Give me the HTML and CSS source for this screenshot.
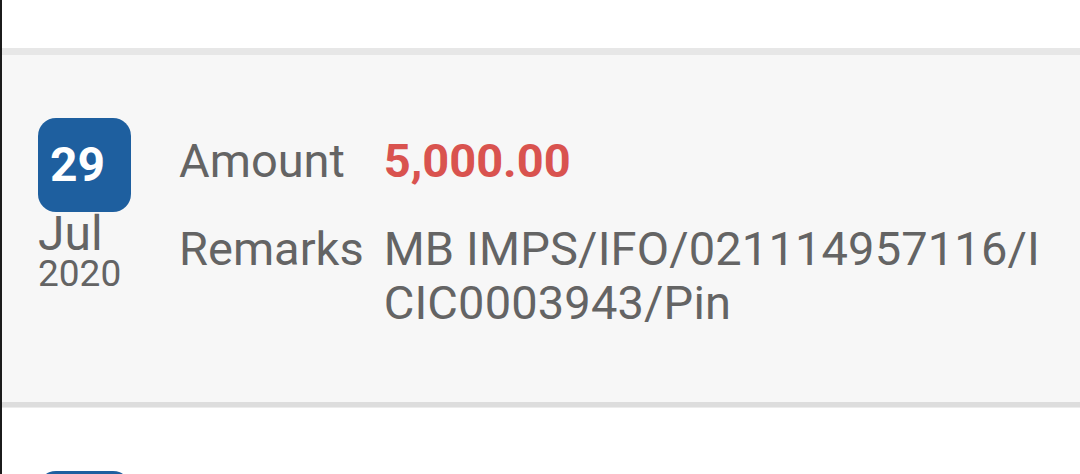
FILE: index.html
```html
<!DOCTYPE html>
<html lang="en">
<head>
<meta charset="utf-8">
<title>Transactions</title>
<link rel="stylesheet" href="styles.css">
</head>
<body>
<div class="screen">
  <div class="list">
    <div class="item item-tail"></div>
    <div class="divider divider-top"></div>
    <div class="item item-active">
      <div class="date">
        <div class="badge">29</div>
        <div class="month">Jul</div>
        <div class="year">2020</div>
      </div>
      <div class="details">
        <div class="label">Amount</div>
        <div class="value amount">5,000.00</div>
        <div class="label">Remarks</div>
        <div class="value remarks">MB IMPS/IFO/021114957116/ICIC0003943/Pin</div>
      </div>
    </div>
    <div class="divider divider-bottom"></div>
    <div class="item">
      <div class="date">
        <div class="badge">28</div>
        <div class="month">Jul</div>
        <div class="year">2020</div>
      </div>
      <div class="details">
        <div class="label">Amount</div>
        <div class="value amount">2,500.00</div>
        <div class="label">Remarks</div>
        <div class="value remarks">MB IMPS/IFO/021014823307/ICIC0003943/Pin</div>
      </div>
    </div>
  </div>
</div>
</body>
</html>
```

FILE: styles.css
```css
html, body {
  margin: 0;
  padding: 0;
  overflow: hidden;
  background: #ffffff;
}

body {
  font-family: Roboto, "Noto Sans", "Liberation Sans", sans-serif;
  color: #646464;
}

.screen {
  height: 474px;
  overflow: hidden;
  border-left: 2px solid #1b1b1b;
  box-sizing: border-box;
}

.list {
  display: flex;
  flex-direction: column;
}

.item-tail {
  height: 48px;
  background: #ffffff;
}

.divider {
  flex: none;
}

.divider-top {
  height: 7px;
  background: #e7e7e7;
}

.divider-bottom {
  height: 6px;
  background: #dddddd;
  border-bottom: 1px solid #ececec;
  box-sizing: border-box;
}

.item {
  display: flex;
  align-items: flex-start;
  gap: 48px;
  padding: 63px 28px 72px 36px;
  background: #ffffff;
  flex: none;
}

.item.item-tail {
  padding: 0;
}

.item-active {
  background: #f7f7f7;
}

.date {
  width: 93px;
  flex: none;
  display: flex;
  flex-direction: column;
}

.badge {
  width: 93px;
  height: 94px;
  box-sizing: border-box;
  background: #1e5f9f;
  border-radius: 18px;
  color: #ffffff;
  font-weight: 700;
  font-size: 48px;
  line-height: 94px;
  padding-left: 12px;
}

.month {
  font-size: 48px;
  line-height: 44px;
  color: #646464;
}

.year {
  font-size: 37px;
  line-height: 36px;
  color: #646464;
}

.details {
  flex: 1;
  min-width: 0;
  display: grid;
  grid-template-columns: auto 1fr;
  column-gap: 20px;
  row-gap: 34px;
  padding-top: 16px;
  font-size: 47px;
  line-height: 54px;
}

.label {
  color: #646464;
}

.value {
  color: #646464;
}

.amount {
  color: #d9534f;
  font-weight: 700;
}

.remarks {
  word-break: break-all;
  letter-spacing: 0.15px;
}
```
